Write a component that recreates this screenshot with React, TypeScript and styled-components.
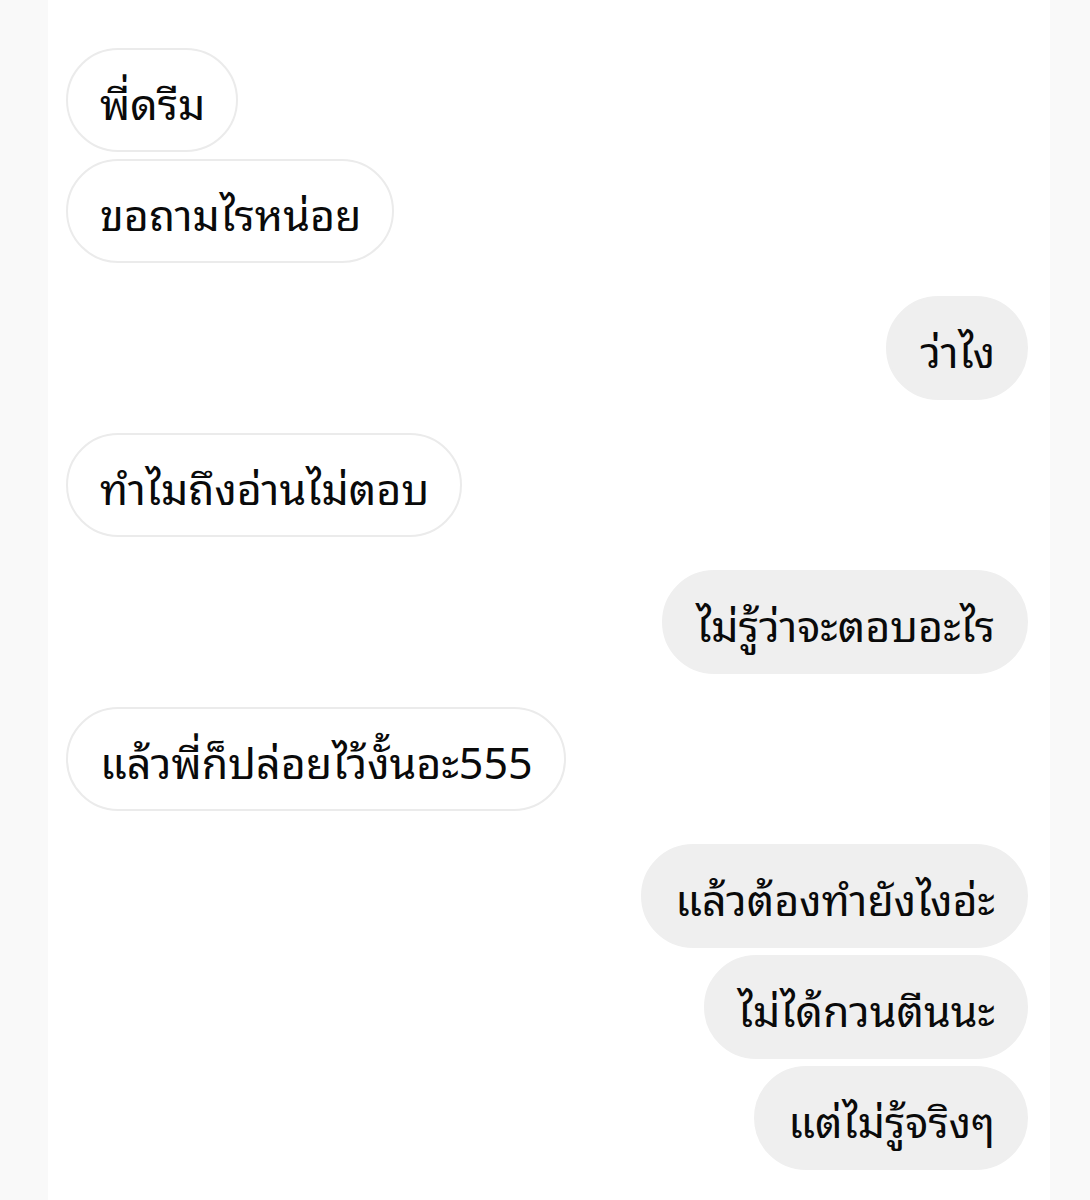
import React from "react";
import styled, { createGlobalStyle } from "styled-components";

const Global = createGlobalStyle`
  html, body { margin: 0; padding: 0; background: #f9f9f9; }
  body { font-family: "Noto Sans Thai Looped", "Noto Sans Thai UI", "Noto Sans Thai", "Noto Sans", sans-serif; }
`;

const Panel = styled.div`
  margin: 0 40px 0 48px;
  background: #ffffff;
  min-height: 1200px;
  box-sizing: border-box;
  padding: 48px 22px 20px 18px;
  display: flex;
  flex-direction: column;
`;

const Group = styled.div<{ $mine?: boolean }>`
  display: flex;
  flex-direction: column;
  align-items: ${(p) => (p.$mine ? "flex-end" : "flex-start")};
  gap: 7px;
  & + & { margin-top: 33px; }
`;

const Bubble = styled.div<{ $mine?: boolean }>`
  box-sizing: border-box;
  height: 104px;
  border-radius: 52px;
  padding: 0 31px 0 32px;
  display: flex;
  align-items: center;
  font-size: 43px;
  font-weight: 450;
  color: #0a0a0a;
  white-space: nowrap;
  background: ${(p) => (p.$mine ? "#efefef" : "#ffffff")};
  border: 2px solid ${(p) => (p.$mine ? "#efefef" : "#ebebeb")};
`;

const groups: { mine: boolean; msgs: string[] }[] = [
  { mine: false, msgs: ["พี่ดรีม", "ขอถามไรหน่อย"] },
  { mine: true, msgs: ["ว่าไง"] },
  { mine: false, msgs: ["ทำไมถึงอ่านไม่ตอบ"] },
  { mine: true, msgs: ["ไม่รู้ว่าจะตอบอะไร"] },
  { mine: false, msgs: ["แล้วพี่ก็ปล่อยไว้งั้นอะ555"] },
  { mine: true, msgs: ["แล้วต้องทำยังไงอ่ะ", "ไม่ได้กวนตีนนะ", "แต่ไม่รู้จริงๆ"] },
];

export default function App() {
  return (
    <>
      <Global />
      <Panel>
        {groups.map((g, i) => (
          <Group key={i} $mine={g.mine}>
            {g.msgs.map((m, j) => (
              <Bubble key={j} $mine={g.mine}>
                {m}
              </Bubble>
            ))}
          </Group>
        ))}
      </Panel>
    </>
  );
}
